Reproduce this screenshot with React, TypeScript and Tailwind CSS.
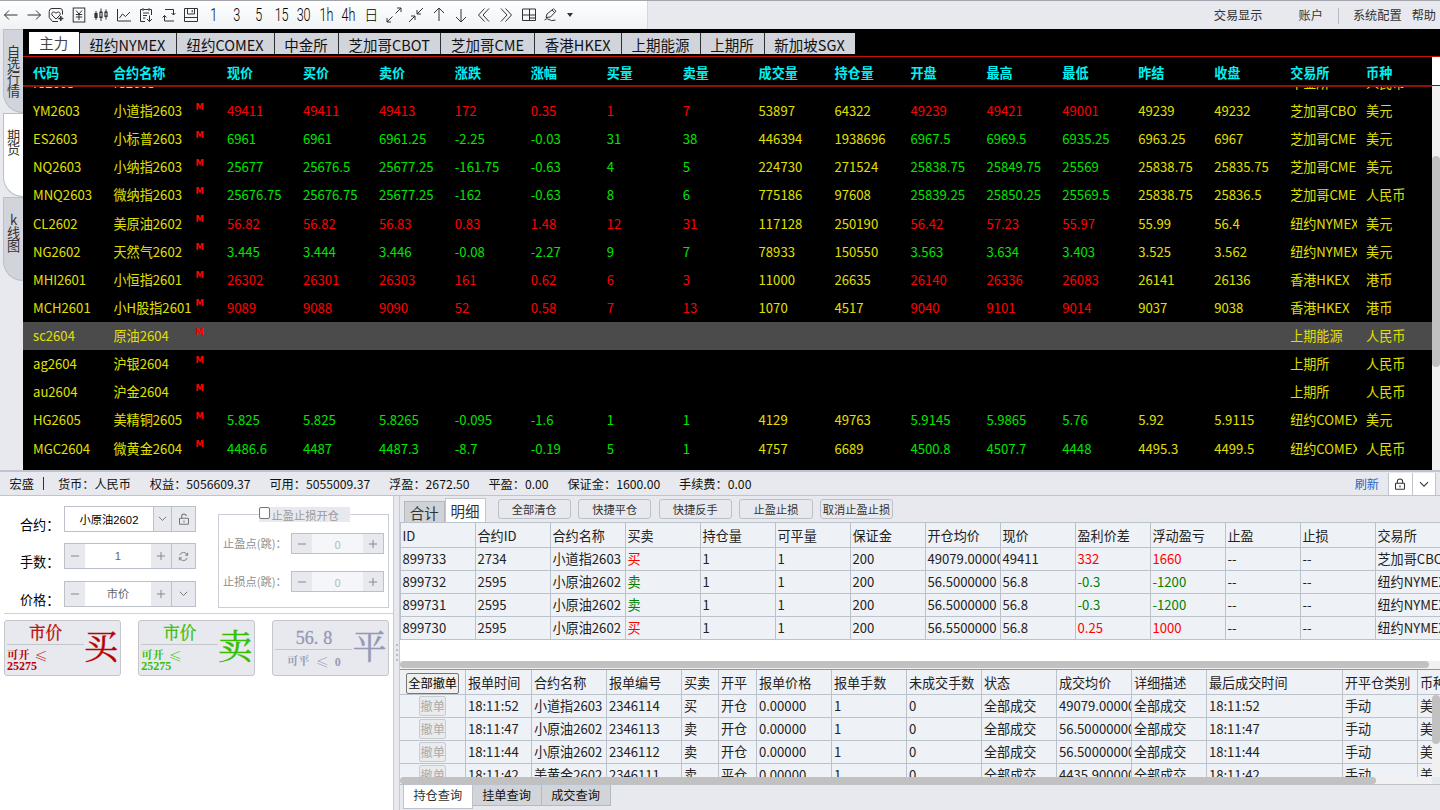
import type { ReactNode } from 'react'
import clsx from 'clsx'

interface Quote {
  code: string
  name: string
  dir: 'up' | 'down'
  // 现价 买价 卖价 涨跌 涨幅 买量 卖量 成交量 持仓量 开盘 最高 最低 昨结 收盘
  values: string[]
  exchange: string
  currency: string
  selected?: boolean
}

const periods = ['1', '3', '5', '15', '30', '1h', '4h']

const marketTabs = [
  { label: '纽约NYMEX', width: 'w-[97px]' },
  { label: '纽约COMEX', width: 'w-[98px]' },
  { label: '中金所', width: 'w-[64px]' },
  { label: '芝加哥CBOT', width: 'w-[102.5px]' },
  { label: '芝加哥CME', width: 'w-[94px]' },
  { label: '香港HKEX', width: 'w-[86.5px]' },
  { label: '上期能源', width: 'w-[79px]' },
  { label: '上期所', width: 'w-[64px]' },
  { label: '新加坡SGX', width: 'w-[91px]' },
]

const quoteColumns = [
  '代码', '合约名称', '现价', '买价', '卖价', '涨跌', '涨幅', '买量', '卖量',
  '成交量', '持仓量', '开盘', '最高', '最低', '昨结', '收盘', '交易所', '币种',
]

const quotes: Quote[] = [
  { code: 'IC2603', name: 'IC2603', dir: 'up', values: [], exchange: '中金所', currency: '人民币' },
  { code: 'YM2603', name: '小道指2603', dir: 'up', values: ['49411', '49411', '49413', '172', '0.35', '1', '7', '53897', '64322', '49239', '49421', '49001', '49239', '49232'], exchange: '芝加哥CBOT', currency: '美元' },
  { code: 'ES2603', name: '小标普2603', dir: 'down', values: ['6961', '6961', '6961.25', '-2.25', '-0.03', '31', '38', '446394', '1938696', '6967.5', '6969.5', '6935.25', '6963.25', '6967'], exchange: '芝加哥CME', currency: '美元' },
  { code: 'NQ2603', name: '小纳指2603', dir: 'down', values: ['25677', '25676.5', '25677.25', '-161.75', '-0.63', '4', '5', '224730', '271524', '25838.75', '25849.75', '25569', '25838.75', '25835.75'], exchange: '芝加哥CME', currency: '美元' },
  { code: 'MNQ2603', name: '微纳指2603', dir: 'down', values: ['25676.75', '25676.75', '25677.25', '-162', '-0.63', '8', '6', '775186', '97608', '25839.25', '25850.25', '25569.5', '25838.75', '25836.5'], exchange: '芝加哥CME', currency: '人民币' },
  { code: 'CL2602', name: '美原油2602', dir: 'up', values: ['56.82', '56.82', '56.83', '0.83', '1.48', '12', '31', '117128', '250190', '56.42', '57.23', '55.97', '55.99', '56.4'], exchange: '纽约NYMEX', currency: '美元' },
  { code: 'NG2602', name: '天然气2602', dir: 'down', values: ['3.445', '3.444', '3.446', '-0.08', '-2.27', '9', '7', '78933', '150550', '3.563', '3.634', '3.403', '3.525', '3.562'], exchange: '纽约NYMEX', currency: '美元' },
  { code: 'MHI2601', name: '小恒指2601', dir: 'up', values: ['26302', '26301', '26303', '161', '0.62', '6', '3', '11000', '26635', '26140', '26336', '26083', '26141', '26136'], exchange: '香港HKEX', currency: '港币' },
  { code: 'MCH2601', name: '小H股指2601', dir: 'up', values: ['9089', '9088', '9090', '52', '0.58', '7', '13', '1070', '4517', '9040', '9101', '9014', '9037', '9038'], exchange: '香港HKEX', currency: '港币' },
  { code: 'sc2604', name: '原油2604', dir: 'up', values: [], exchange: '上期能源', currency: '人民币', selected: true },
  { code: 'ag2604', name: '沪银2604', dir: 'up', values: [], exchange: '上期所', currency: '人民币' },
  { code: 'au2604', name: '沪金2604', dir: 'up', values: [], exchange: '上期所', currency: '人民币' },
  { code: 'HG2605', name: '美精铜2605', dir: 'down', values: ['5.825', '5.825', '5.8265', '-0.095', '-1.6', '1', '1', '4129', '49763', '5.9145', '5.9865', '5.76', '5.92', '5.9115'], exchange: '纽约COMEX', currency: '美元' },
  { code: 'MGC2604', name: '微黄金2604', dir: 'down', values: ['4486.6', '4487', '4487.3', '-8.7', '-0.19', '5', '1', '4757', '6689', '4500.8', '4507.7', '4448', '4495.3', '4499.5'], exchange: '纽约COMEX', currency: '人民币' },
  { code: '', name: '', dir: 'up', values: [], exchange: '', currency: '' },
]

const positionColumns = ['ID', '合约ID', '合约名称', '买卖', '持仓量', '可平量', '保证金', '开仓均价', '现价', '盈利价差', '浮动盈亏', '止盈', '止损', '交易所']

const positions = [
  ['899733', '2734', '小道指2603', '买', '1', '1', '200', '49079.00000', '49411', '332', '1660', '--', '--', '芝加哥CBOT'],
  ['899732', '2595', '小原油2602', '卖', '1', '1', '200', '56.5000000', '56.8', '-0.3', '-1200', '--', '--', '纽约NYMEX'],
  ['899731', '2595', '小原油2602', '卖', '1', '1', '200', '56.5000000', '56.8', '-0.3', '-1200', '--', '--', '纽约NYMEX'],
  ['899730', '2595', '小原油2602', '买', '1', '1', '200', '56.5500000', '56.8', '0.25', '1000', '--', '--', '纽约NYMEX'],
]

const orderColumns = ['报单时间', '合约名称', '报单编号', '买卖', '开平', '报单价格', '报单手数', '未成交手数', '状态', '成交均价', '详细描述', '最后成交时间', '开平仓类别', '币种']

const orders = [
  ['18:11:52', '小道指2603', '2346114', '买', '开仓', '0.00000', '1', '0', '全部成交', '49079.00000', '全部成交', '18:11:52', '手动', '美元'],
  ['18:11:47', '小原油2602', '2346113', '卖', '开仓', '0.00000', '1', '0', '全部成交', '56.50000000', '全部成交', '18:11:47', '手动', '美元'],
  ['18:11:44', '小原油2602', '2346112', '卖', '开仓', '0.00000', '1', '0', '全部成交', '56.50000000', '全部成交', '18:11:44', '手动', '美元'],
  ['18:11:42', '美黄金2602', '2346111', '卖', '平仓', '0.00000', '1', '0', '全部成交', '4435.900000', '全部成交', '18:11:42', '手动', '美元'],
]

const quoteGrid = 'grid grid-cols-[81px_114px_repeat(16,75.94px)] w-[1409px]'
const positionGrid = 'grid grid-cols-[repeat(14,75px)]'
const orderGrid = 'grid grid-cols-[65.4px_66px_75px_75px_37px_38px_75px_75px_75px_75px_75px_75px_136px_75px_75px]'

function Icon({ children, size = 16, width = 1, className }: { children: ReactNode; size?: number; width?: number; className?: string }) {
  return (
    <svg width={size} height={size} viewBox="0 0 16 16" fill="none" stroke="currentColor" strokeWidth={width} className={clsx('shrink-0', className)}>
      {children}
    </svg>
  )
}

const leftIcons: ReactNode[] = [
  <path d="M1.5 8H14.5M6 3.5L1.5 8L6 12.5" />,
  <path d="M1.5 8H14.5M10 3.5L14.5 8L10 12.5" />,
  <>
    <path d="M14.5 7.5V4Q14.5 1.5 12 1.5H4Q1.2 1.5 1.2 4.5V10.5L4.5 14.5H10" />
    <path d="M8 12L4 8C2.8 5.8 5.5 3.6 8 6.2C10.5 3.6 13.2 5.8 12 8Z" />
    <path d="M12.8 9V14M10.3 11.5H15.3" strokeWidth="1.5" />
  </>,
  <>
    <rect x="2.2" y="1" width="11.6" height="14" />
    <path d="M5 3.5L8 7L11 3.5M8 7V13M4.8 7.5H11.2M4.8 10H11.2" />
  </>,
  <>
    <path d="M3 4V13M8 1.5V14M13 2.5V12.5" />
    <path d="M3 6V11M8 4.5V11M13 4.5V10" strokeWidth="3.2" />
    <path d="M8 6V9.5M13 6V8.5" stroke="#f5f6f8" />
  </>,
  <path d="M1.5 2V14H15M3.5 11L6.5 7L9.5 9.5L14 5" />,
  <>
    <path d="M4.5 2.5H2.5V14.5H7M11.5 2.5H13.5V8M5 1V4M11 1V4M5.5 2.5H10.5M5 6H11M5 8.5H9M5 11H7.5" />
    <path d="M11.5 8.5V14.5M9 12L11.5 14.5L14 12" />
  </>,
  <>
    <path d="M4 2.5H12.5V8M10.5 6L12.5 8L14.5 6" />
    <path d="M13 14H3.5V8.5M1.5 10.5L3.5 8.5L5.5 10.5" />
  </>,
  <>
    <path d="M1.5 1.5H14.5V14.5H1.5Z" />
    <path d="M4.5 1.5V7H11.5V1.5M9.2 3V5.5M1.5 10.5H14.5" />
  </>,
]

const rightIcons: ReactNode[] = [
  <path d="M9.5 6.5L15 1M11 1H15V5M6.5 9.5L1 15M1 11V15H5" />,
  <path d="M9 7L15 1M9 3V7H13M7 9L1 15M3 9H7V13" />,
  <path d="M8 14V1M3 6L8 1L13 6" />,
  <path d="M8 2V15M3 10L8 15L13 10" />,
  <path d="M8.5 1.5L2.5 8L8.5 14.5M13 1.5L7 8L13 14.5" />,
  <path d="M3 1.5L9 8L3 14.5M7.5 1.5L13.5 8L7.5 14.5" />,
  <path d="M1.5 2H14.5V13.5H1.5ZM1.5 8H14.5M8.5 2V13.5M8.5 11H14.5" />,
  <>
    <path d="M3 10.5L4 7L10.5 1.8L13 4.2L7.5 10L3 10.5M9 3L11.5 5.5" />
    <path d="M1.5 13Q4 10.5 6 12.5T12.5 13" />
  </>,
]

function Chevron({ size = 10 }: { size?: number }) {
  return <Icon size={size} width={1.7}><path d="M1.5 5L8 11.5L14.5 5" /></Icon>
}

function Lock({ open }: { open?: boolean }) {
  return (
    <Icon size={12} width={1.4}>
      <rect x="2" y="7" width="12" height="8" rx="1" />
      <path d={open ? 'M5 7V4Q5 1.2 8 1.2T11 4' : 'M4.5 7V4.5Q4.5 1.2 8 1.2T11.5 4.5V7'} />
      <path d="M8 10V12.5" />
    </Icon>
  )
}

function Toolbar() {
  return (
    <header className="flex h-[29px] shrink-0 justify-between border-t border-[#a4a4ad] bg-[#e7e9ee] text-[#333]">
      <div className="flex w-[648px] items-center border-r border-[#d3d6dc] bg-gradient-to-b from-white to-[#eff1f4]">
        {leftIcons.map((icon, i) => (
          <div key={i} className="flex w-[22.5px] justify-center"><Icon>{icon}</Icon></div>
        ))}
        {periods.map(p => (
          <div key={p} className="flex w-[22.5px] justify-center">
            <span className="scale-x-[0.72] font-['Roboto'] text-[17.5px] leading-[18px] font-light tracking-[-0.3px] text-black">{p}</span>
          </div>
        ))}
        <div className="flex w-[22.5px] justify-center pb-[2px] text-[14px] leading-none font-light text-black">日</div>
        {rightIcons.map((icon, i) => (
          <div key={i} className="flex w-[22.5px] justify-center"><Icon>{icon}</Icon></div>
        ))}
        <svg width="6" height="4" viewBox="0 0 6 4" className="ml-[4px]"><path d="M0 0H6L3 4Z" fill="#333" /></svg>
      </div>
      <nav className="flex items-center pt-px pr-[4px] text-[12.19px] text-[#333]">
        <span>交易显示</span>
        <span className="ml-[36px]">账户</span>
        <span className="ml-[15px] h-[16px] w-px bg-[#b9bcc4]" />
        <span className="ml-[14px]">系统配置</span>
        <span className="ml-[10px]">帮助</span>
      </nav>
    </header>
  )
}

function SideTab({ chars, active }: { chars: string; active?: boolean }) {
  return (
    <div
      className={clsx(
        'flex h-[84px] w-[20px] flex-col items-center rounded-bl-[20px] border border-r-0 border-[#b9c0ca] pt-[15px] text-[13.125px] leading-[13px] text-[#333]',
        active ? 'bg-white' : 'bg-[#d1d4db]',
      )}
    >
      {chars.split('').map(c => <span key={c}>{c}</span>)}
    </div>
  )
}

function QuoteRow({ quote }: { quote: Quote }) {
  const tone = quote.dir === 'up' ? 'text-[#ff0000]' : 'text-[#00e600]'
  return (
    <div className={clsx(quoteGrid, 'h-[28.125px] shrink-0 items-center leading-[28px] text-[#e0e000]', quote.selected && 'bg-[#4b4b4b]')}>
      <span className="pl-[10px]">{quote.code}</span>
      <span className="flex justify-between pr-[14px] pl-[9.5px]">
        <span>{quote.name}</span>
        <b className="-mt-[4.5px] font-['DejaVu_Sans'] text-[8.5px] text-[#ff0000]">M</b>
      </span>
      {Array.from({ length: 14 }, (_, i) => (
        <span key={i} className={clsx('pl-[9px]', ![7, 8, 12, 13].includes(i) && tone)}>{quote.values[i]}</span>
      ))}
      <span className="pr-[0.5px] pl-[9px]"><span className="block overflow-hidden">{quote.exchange}</span></span>
      <span className="pl-[9px]">{quote.currency}</span>
    </div>
  )
}

function Market() {
  return (
    <section className="flex h-[441px] shrink-0">
      <aside className="flex w-[23px] flex-col items-end bg-[#e7e9ee]">
        <SideTab chars="自选行情" />
        <SideTab chars="期货" active />
        <SideTab chars="k线图" />
      </aside>
      <div className="flex min-w-0 flex-1 flex-col bg-black">
        <div className="flex h-[28px] shrink-0 items-start border-b border-[#c41200] pl-[6px] text-[14.5px]">
          <div className="mt-[3px] flex h-[22px] w-[49.5px] items-center justify-center bg-white text-[#444]">主力</div>
          {marketTabs.map(tab => (
            <div key={tab.label} className={clsx('mt-[4px] flex h-[21px] shrink-0 items-center justify-center border-l border-[#2c2f33] bg-[#d1d4db] pt-[3px] text-[#111]', tab.width)}>
              {tab.label}
            </div>
          ))}
        </div>
        <div className="flex min-h-0 flex-1 whitespace-nowrap">
          <div className="flex w-[1409px] flex-col overflow-hidden">
            <div className={clsx(quoteGrid, 'h-[30px] shrink-0 items-center border-b-2 border-[#8e1208] pt-[3px] text-[13.125px] font-bold text-[#00f2f2]')}>
              {quoteColumns.map((c, i) => <span key={c} className={i === 0 ? 'pl-[10px]' : 'pl-[9px]'}>{c}</span>)}
            </div>
            <div className="flex flex-1 flex-col overflow-hidden text-[13.125px]">
              <div className="-mt-[18.2px] flex flex-col">
                {quotes.map((q, i) => <QuoteRow key={i} quote={q} />)}
              </div>
            </div>
          </div>
          <div className="flex w-[8px] flex-col">
            <div className="h-[28px] bg-white" />
            <div className="h-px bg-[#8e1208]" />
            <div className="flex-1 bg-[#f1f1f1] pt-[70px]"><div className="h-[211px] rounded-full bg-[#c1c1c1]" /></div>
          </div>
        </div>
      </div>
    </section>
  )
}

function AccountBar() {
  const items = ['货币：人民币', '权益：5056609.37', '可用：5055009.37', '浮盈：2672.50', '平盈：0.00', '保证金：1600.00', '手续费：0.00']
  return (
    <div className="flex h-[26px] shrink-0 items-center border-y border-t-2 border-[#bfc3cb] bg-[#e7e9ee] pl-[9.5px] text-[12.19px] text-[#111]">
      <span className="pt-px">宏盛</span>
      <span className="mr-[14px] ml-[9px] h-[13px] w-px bg-[#333]" />
      <div className="flex gap-[18.8px] pt-px">
        {items.map(t => <span key={t}>{t}</span>)}
      </div>
      <span className="ml-auto pt-px text-[#3162c4]">刷新</span>
      <div className="mr-[4px] ml-[9px] flex gap-px bg-[#bfc3cb] px-px text-[#333]">
        <div className="flex h-[22px] w-[22.5px] items-center justify-center bg-white"><Lock /></div>
        <div className="flex h-[22px] w-[22.5px] items-center justify-center bg-white"><Chevron /></div>
      </div>
    </div>
  )
}

function Sign({ plus }: { plus?: boolean }) {
  return (
    <div className="flex w-[20px] shrink-0 items-center justify-center bg-[#e7e9ee] text-[#888]">
      <Icon size={10} width={1.6}><path d={plus ? 'M1.5 8H14.5M8 1.5V14.5' : 'M1.5 8H14.5'} /></Icon>
    </div>
  )
}

function Field({ label, children }: { label: string; children: ReactNode }) {
  return (
    <div className="flex h-[26px] items-center">
      <span className="w-[44px] pt-[12px] text-[13.125px] whitespace-nowrap text-black">{label}</span>
      <div className="flex h-[26px] w-[132px] border border-[#bcc1c9] bg-white font-['Liberation_Sans','Noto_Sans_CJK_SC',sans-serif] text-[11.25px] text-[#666]">{children}</div>
    </div>
  )
}

function SideButton({ children }: { children: ReactNode }) {
  return <div className="flex w-[24px] items-center justify-center border-l border-[#bcc1c9] bg-[#e7e9ee] text-[#777]">{children}</div>
}

function StopField({ label }: { label: string }) {
  return (
    <div className="flex h-[21px] items-center justify-between pr-[4px] pl-[4.5px] text-[11.25px] text-[#8e8e8e]">
      <span className="whitespace-nowrap">{label}</span>
      <div className="flex h-[21px] w-[93px] shrink-0 border border-[#bcc1c9] bg-[#f4f6f9]">
        <Sign />
        <div className="flex flex-1 items-center justify-center pt-px text-[#b5bac2]">0</div>
        <Sign plus />
      </div>
    </div>
  )
}

function TradeButton({ price, glyph, tone, children, small }: { price: ReactNode; glyph: string; tone: string; children: ReactNode; small?: boolean }) {
  return (
    <div className={clsx("flex h-[56px] w-[116.5px] rounded-[3px] border border-[#c3c7cc] bg-[#e7e9ee] font-['Liberation_Serif','Noto_Serif_CJK_SC','Noto_Sans_CJK_SC',serif]", tone)}>
      <div className="flex w-[79px] shrink-0 flex-col pl-[2px]">
        <div className={clsx('flex items-center justify-center border-b border-[#c3c7cc] leading-none [-webkit-text-stroke:0.3px_currentColor]', small ? 'h-[29px] pt-[6px] text-[18px]' : 'h-[24px] pt-[3px] text-[16.5px]')}>{price}</div>
        {children}
      </div>
      <div className="flex flex-1 items-center text-[34px] leading-none whitespace-nowrap [-webkit-text-stroke:0.4px_currentColor]">{glyph}</div>
    </div>
  )
}

function LessEqual() {
  return <span className="font-['Noto_Serif_CJK_SC','Noto_Sans_CJK_SC',serif] text-[13px] leading-[11px] font-normal">≤</span>
}

function OpenLimit({ lots }: { lots: string }) {
  return (
    <div className="pt-[4.5px] leading-[11px] font-bold">
      <div className="flex gap-[5px] text-[11.25px]"><span>可开</span><LessEqual /></div>
      <div className="text-[12px]">{lots}</div>
    </div>
  )
}

function OrderPanel() {
  return (
    <div className="flex w-[393px] shrink-0 flex-col bg-white">
      <div className="flex h-[117px] shrink-0 pl-[20px]">
        <div className="flex flex-col gap-[11.5px] pt-[9.5px]">
          <Field label="合约：">
            <div className="flex flex-1 items-center justify-center pt-[3px] text-black">小原油2602</div>
            <div className="flex w-[18px] items-center justify-center border-l border-[#bcc1c9] bg-[#e7e9ee] text-[#777]"><Chevron size={9} /></div>
            <SideButton><Lock open /></SideButton>
          </Field>
          <Field label="手数：">
            <Sign />
            <div className="flex flex-1 items-center justify-center">1</div>
            <Sign plus />
            <SideButton>
              <Icon size={11} width={1.3}><path d="M2.5 6Q4 2 8 2T13.5 6M14 2.5V6.2H10.5M13.5 10Q12 14 8 14T2.5 10M2 13.5V9.8H5.5" /></Icon>
            </SideButton>
          </Field>
          <Field label="价格：">
            <Sign />
            <div className="flex flex-1 items-center justify-center pt-px">市价</div>
            <Sign plus />
            <SideButton><Chevron size={9} /></SideButton>
          </Field>
        </div>
        <div className="mt-[18px] ml-[21.5px] h-[94px] w-[171.5px] border border-[#cbced6]">
          <div className="-mt-[8px] ml-[40px] flex h-[15px] w-[91px] items-center bg-[#e7e9ee] text-[11.25px] text-[#9a9a9a]">
            <span className="-mt-[3px] mr-[1.5px] size-[11.5px] rounded-[2px] border border-[#777] bg-white" />
            <span className="pt-px">止盈止损开仓</span>
          </div>
          <div className="flex flex-col gap-[17px] pt-[11px]">
            <StopField label="止盈点(跳)：" />
            <StopField label="止损点(跳)：" />
          </div>
        </div>
      </div>
      <div className="ml-[4px] h-px bg-[#cfd2da]" />
      <div className="flex gap-[17.7px] pt-[6px] pl-[4px]">
        <TradeButton price="市价" glyph="买" tone="text-[#b80000]">
          <OpenLimit lots="25275" />
        </TradeButton>
        <TradeButton price="市价" glyph="卖" tone="text-[#38bd00]">
          <OpenLimit lots="25275" />
        </TradeButton>
        <TradeButton price={<>56.<span className="ml-[5px]">8</span></>} glyph="平" tone="text-[#9599b5]" small>
          <div className="flex justify-center gap-[6px] pt-[6px] text-[11.25px] leading-none font-bold"><span>可平</span><LessEqual /><span className="text-[12px]">0</span></div>
        </TradeButton>
      </div>
    </div>
  )
}

function Cell({ children, tone }: { children?: ReactNode; tone?: string }) {
  return <div className={clsx('flex items-center overflow-hidden border-b border-l border-[#bcc2cc] pl-[1.5px]', tone)}>{children}</div>
}

function pnlTone(row: string[], i: number) {
  if (i === 3) return row[3] === '买' ? 'text-[#ff0000]' : 'text-[#008000]'
  if (i === 9 || i === 10) return row[9].startsWith('-') ? 'text-[#008000]' : 'text-[#ff0000]'
  return undefined
}

function Positions() {
  return (
    <div className="flex h-[174px] shrink-0 flex-col">
      <div className="flex h-[26px] shrink-0 items-end pl-[4px] text-[14.5px] text-[#333]">
        <div className="flex h-[21px] w-[40.5px] items-center justify-center border border-b-0 border-[#b4b8bf] bg-[#cfd2d7] pt-px">合计</div>
        <div className="flex h-[24px] w-[41px] items-center justify-center border border-b-0 border-[#c2c6cd] bg-white">明细</div>
        <div className="mb-[3.5px] ml-[12px] flex gap-[7.3px] text-[11.25px]">
          {['全部清仓', '快捷平仓', '快捷反手', '止盈止损', '取消止盈止损'].map(t => (
            <button key={t} className="h-[19.5px] w-[73.3px] rounded-[3px] border border-[#bcc0c7] pt-px whitespace-nowrap">{t}</button>
          ))}
        </div>
      </div>
      <div className="flex-1 overflow-hidden bg-white text-[13.125px] whitespace-nowrap text-[#222]">
        <div className={clsx(positionGrid, 'h-[26px] border-t border-[#bcc2cc] bg-[#eef1f5] *:pt-[2px]')}>
          {positionColumns.map(c => <Cell key={c}>{c}</Cell>)}
        </div>
        {positions.map(row => (
          <div key={row[0]} className={clsx(positionGrid, 'h-[23px] bg-[#eef1f5]')}>
            {row.map((v, i) => <Cell key={i} tone={pnlTone(row, i)}>{v}</Cell>)}
          </div>
        ))}
      </div>
      <div className="h-[8px] bg-[#f1f1f1]"><div className="h-[7px] w-[1029px] rounded-full bg-[#c1c1c1]" /></div>
      <div className="h-px bg-[#8f949e]" />
    </div>
  )
}

function Orders() {
  return (
    <div className="flex h-[115px] shrink-0 flex-col border-b border-[#bcc2cc] text-[13.125px] whitespace-nowrap text-[#222]">
      <div className={clsx(orderGrid, 'h-[25px] shrink-0 bg-[#eef1f5] *:pt-[2px]')}>
        <div className="flex items-center justify-center border-b border-[#bcc2cc]">
          <button className="h-[21px] w-[53.5px] rounded-[2px] border border-[#767676] bg-[#efefef] text-[12.19px] text-black">全部撤单</button>
        </div>
        {orderColumns.map((c, i) => <Cell key={i}>{c}</Cell>)}
      </div>
      <div className="flex h-[82px]">
        <div className="w-[1032px] overflow-hidden bg-[#eef1f5]">
          {orders.map(row => (
            <div key={row[2]} className={clsx(orderGrid, 'h-[23px]')}>
              <div className="flex items-center justify-center border-b border-[#bcc2cc]">
                <button className="h-[20.5px] w-[27.5px] rounded-[2px] border border-[#c9cbce] bg-[#e9ebed] text-[12.19px] leading-none text-[#aaa]">撤单</button>
              </div>
              {row.map((v, i) => <Cell key={i}>{v}</Cell>)}
            </div>
          ))}
        </div>
        <div className="w-[8px] bg-[#f1f1f1]"><div className="h-[49px] rounded-full bg-[#c1c1c1]" /></div>
      </div>
      <div className="h-[7px] w-[1032px] bg-[#f1f1f1]"><div className="h-[7px] w-[975.5px] rounded-full bg-[#c1c1c1]" /></div>
    </div>
  )
}

function BottomTabs() {
  return (
    <div className="flex items-start pl-[3px] text-[12.19px] text-[#333]">
      <div className="flex h-[24px] w-[69.5px] items-center justify-center border border-t-0 border-[#bcc2cc] bg-white pb-[2px]">持仓查询</div>
      <div className="flex h-[21px] w-[69px] items-center justify-center border border-t-0 border-l-0 border-[#b4b9c1] bg-[#d1d4d9] text-[#111]">挂单查询</div>
      <div className="flex h-[21px] w-[69px] items-center justify-center border border-t-0 border-l-0 border-[#b4b9c1] bg-[#d1d4d9] text-[#111]">成交查询</div>
    </div>
  )
}

export default function App() {
  return (
    <div className="flex h-[810px] w-[1440px] flex-col overflow-hidden bg-[#e7e9ee] font-['Noto_Sans_CJK_SC',sans-serif]">
      <Toolbar />
      <Market />
      <AccountBar />
      <main className="flex min-h-0 flex-1">
        <OrderPanel />
        <div className="flex w-[7px] shrink-0 flex-col items-center gap-[3px] border-x border-[#c3cad4] pt-[148px]">
          {[0, 1, 2, 3].map(i => <span key={i} className="size-[2px] rounded-full bg-[#a9aeb6]" />)}
        </div>
        <div className="flex w-[1040px] shrink-0 flex-col overflow-hidden">
          <Positions />
          <Orders />
          <BottomTabs />
        </div>
      </main>
    </div>
  )
}
